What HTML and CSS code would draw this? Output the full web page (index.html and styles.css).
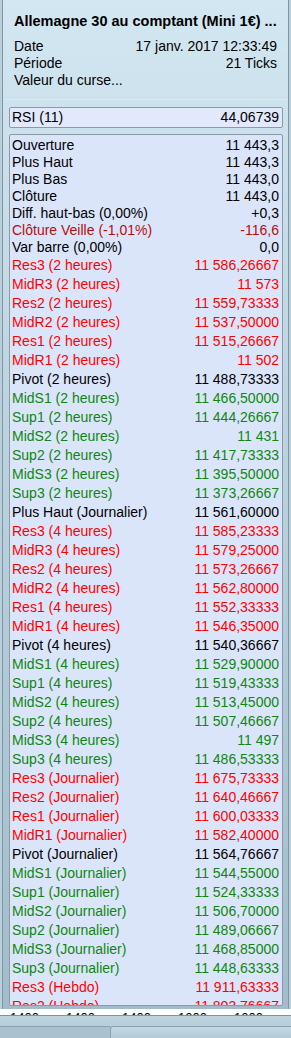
FILE: index.html
```html
<!DOCTYPE html>
<html lang="fr">
<head>
<meta charset="utf-8">
<title>Allemagne 30</title>
<link rel="stylesheet" href="styles.css">
</head>
<body>
<div class="frame">
  <div class="panel">
    <div class="head">
      <div class="title">Allemagne 30 au comptant (Mini 1€) ...</div>
      <div class="info">
        <div class="line"><span>Date</span><span>17 janv. 2017 12:33:49</span></div>
        <div class="line"><span>Période</span><span>21 Ticks</span></div>
        <div class="line"><span>Valeur du curse...</span></div>
      </div>
    </div>
    <div class="sep"></div>
    <div class="box rsi"><div class="row"><span>RSI (11)</span><span>44,06739</span></div></div>
    <div class="box data">
      <div class="group tight">
        <div class="row"><span>Ouverture</span><span>11 443,3</span></div>
        <div class="row"><span>Plus Haut</span><span>11 443,3</span></div>
        <div class="row"><span>Plus Bas</span><span>11 443,0</span></div>
        <div class="row"><span>Clôture</span><span>11 443,0</span></div>
        <div class="row"><span>Diff. haut-bas (0,00%)</span><span>+0,3</span></div>
        <div class="row dred"><span>Clôture Veille (-1,01%)</span><span>-116,6</span></div>
        <div class="row"><span>Var barre (0,00%)</span><span>0,0</span></div>
      </div>
      <div class="group wide">
        <div class="row red"><span>Res3 (2 heures)</span><span>11 586,26667</span></div>
        <div class="row red"><span>MidR3 (2 heures)</span><span>11 573</span></div>
        <div class="row red"><span>Res2 (2 heures)</span><span>11 559,73333</span></div>
        <div class="row red"><span>MidR2 (2 heures)</span><span>11 537,50000</span></div>
        <div class="row red"><span>Res1 (2 heures)</span><span>11 515,26667</span></div>
        <div class="row red"><span>MidR1 (2 heures)</span><span>11 502</span></div>
        <div class="row"><span>Pivot (2 heures)</span><span>11 488,73333</span></div>
        <div class="row green"><span>MidS1 (2 heures)</span><span>11 466,50000</span></div>
        <div class="row green"><span>Sup1 (2 heures)</span><span>11 444,26667</span></div>
        <div class="row green"><span>MidS2 (2 heures)</span><span>11 431</span></div>
        <div class="row green"><span>Sup2 (2 heures)</span><span>11 417,73333</span></div>
        <div class="row green"><span>MidS3 (2 heures)</span><span>11 395,50000</span></div>
        <div class="row green"><span>Sup3 (2 heures)</span><span>11 373,26667</span></div>
        <div class="row"><span>Plus Haut (Journalier)</span><span>11 561,60000</span></div>
        <div class="row red"><span>Res3 (4 heures)</span><span>11 585,23333</span></div>
        <div class="row red"><span>MidR3 (4 heures)</span><span>11 579,25000</span></div>
        <div class="row red"><span>Res2 (4 heures)</span><span>11 573,26667</span></div>
        <div class="row red"><span>MidR2 (4 heures)</span><span>11 562,80000</span></div>
        <div class="row red"><span>Res1 (4 heures)</span><span>11 552,33333</span></div>
        <div class="row red"><span>MidR1 (4 heures)</span><span>11 546,35000</span></div>
        <div class="row"><span>Pivot (4 heures)</span><span>11 540,36667</span></div>
        <div class="row green"><span>MidS1 (4 heures)</span><span>11 529,90000</span></div>
        <div class="row green"><span>Sup1 (4 heures)</span><span>11 519,43333</span></div>
        <div class="row green"><span>MidS2 (4 heures)</span><span>11 513,45000</span></div>
        <div class="row green"><span>Sup2 (4 heures)</span><span>11 507,46667</span></div>
        <div class="row green"><span>MidS3 (4 heures)</span><span>11 497</span></div>
        <div class="row green"><span>Sup3 (4 heures)</span><span>11 486,53333</span></div>
        <div class="row red"><span>Res3 (Journalier)</span><span>11 675,73333</span></div>
        <div class="row red"><span>Res2 (Journalier)</span><span>11 640,46667</span></div>
        <div class="row red"><span>Res1 (Journalier)</span><span>11 600,03333</span></div>
        <div class="row red"><span>MidR1 (Journalier)</span><span>11 582,40000</span></div>
        <div class="row"><span>Pivot (Journalier)</span><span>11 564,76667</span></div>
        <div class="row green"><span>MidS1 (Journalier)</span><span>11 544,55000</span></div>
        <div class="row green"><span>Sup1 (Journalier)</span><span>11 524,33333</span></div>
        <div class="row green"><span>MidS2 (Journalier)</span><span>11 506,70000</span></div>
        <div class="row green"><span>Sup2 (Journalier)</span><span>11 489,06667</span></div>
        <div class="row green"><span>MidS3 (Journalier)</span><span>11 468,85000</span></div>
        <div class="row green"><span>Sup3 (Journalier)</span><span>11 448,63333</span></div>
        <div class="row red"><span>Res3 (Hebdo)</span><span>11 911,63333</span></div>
        <div class="row red"><span>Res2 (Hebdo)</span><span>11 803,76667</span></div>
      </div>
    </div>
  </div>
  <div class="axis">
    <span class="tick">1400</span><span class="tick">1400</span><span class="tick">1400</span><span class="tick">1000</span><span class="tick">1000</span>
  </div>
  <div class="tabbar">
    <div class="tab-left"></div>
    <div class="tab-right"></div>
  </div>
</div>
</body>
</html>
```

FILE: styles.css
```css
html, body {
  margin: 0;
  padding: 0;
}
body {
  width: 291px;
  height: 1038px;
  overflow: hidden;
  background: #b9d0dc;
  font-family: "Liberation Sans", Arial, sans-serif;
  font-size: 14px;
  color: #000;
}
.frame {
  display: flex;
  flex-direction: column;
  height: 1038px;
}
.panel {
  height: 1009px;
  flex: none;
  margin: 0 2px;
  border-left: 1px solid #7f96a2;
  border-right: 1px solid #7f96a2;
  background: linear-gradient(to bottom, #d3e7f2 0%, #bdd4e0 40%, #a2bccb 100%);
  display: flex;
  flex-direction: column;
  overflow: hidden;
  box-sizing: border-box;
}
.head {
  padding: 13px 11px 0 11px;
}
.title {
  font-weight: bold;
  font-size: 14.5px;
  line-height: 17px;
  white-space: nowrap;
}
.info {
  margin-top: 8px;
}
.line {
  display: flex;
  justify-content: space-between;
  line-height: 17px;
  white-space: nowrap;
}
.sep {
  height: 1px;
  margin: 10px 0 7px 1px;
  background: #dce9f1;
  flex: none;
}
.box {
  margin: 0 5px 0 6px;
  border: 1px solid #8a9ba6;
  border-radius: 2px;
  padding: 0 3px 0 2px;
  flex: none;
}
.rsi {
  background: #e2e9fd;
  line-height: 19px;
}
.data {
  margin-top: 6px;
  height: 872px;
  box-sizing: border-box;
  background: #dbe5fa;
  padding-top: 1.5px;
  overflow: hidden;
}
.row {
  display: flex;
  justify-content: space-between;
  white-space: nowrap;
}
.tight .row {
  line-height: 17px;
}
.wide .row {
  line-height: 19px;
}
.red {
  color: #ff0000;
}
.dred {
  color: #b40f0f;
}
.green {
  color: #0f870f;
}
.axis {
  height: 6px;
  background: #fdfdfd;
  overflow: hidden;
  display: flex;
  font-size: 13px;
  line-height: 14px;
  flex: none;
}
.tick {
  display: block;
  height: 6px;
  overflow: hidden;
  padding-top: 2px;
  padding-left: 10px;
  width: 46px;
}
.tabbar {
  flex: 1;
  border-top: 1px solid #7e95a1;
  background: linear-gradient(to bottom, #bed5e0, #adc6d2);
  display: flex;
  padding-top: 10px;
}
.tab-left {
  width: 110px;
  border-top: 1px solid #8aa2ae;
  background: #a9c2cf;
}
.tab-right {
  flex: 1;
  border-top: 1px solid #8aa2ae;
  border-left: 1px solid #8aa2ae;
  border-radius: 3px 0 0 0;
  background: linear-gradient(to bottom, #c3d8e3, #b3cbd7);
}
```
